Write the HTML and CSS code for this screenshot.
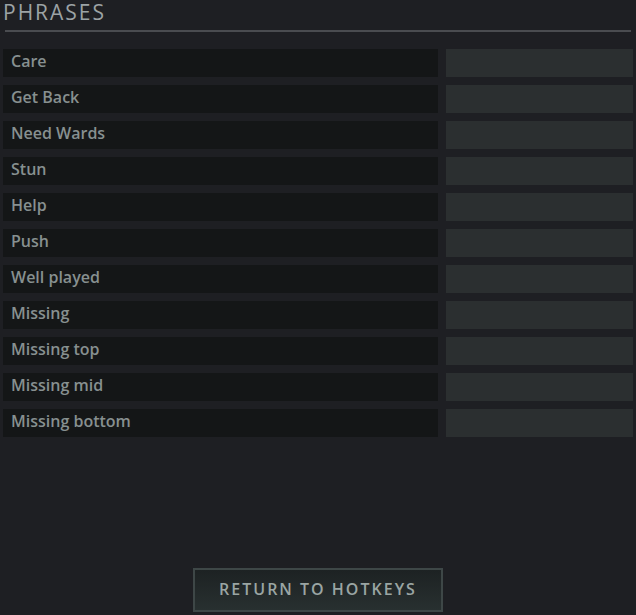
FILE: index.html
```html
<!DOCTYPE html>
<html lang="en">
<head>
    <meta charset="UTF-8">
    <meta name="viewport" content="width=device-width, initial-scale=1.0">
    <title>Phrases</title>
    <link rel="stylesheet" href="styles.css">
</head>
<body>
    <div class="panel">
        <h1 class="panel-title">PHRASES</h1>
        <div class="divider"></div>

        <div class="phrase-list">
            <div class="phrase-row"><div class="phrase-name">Care</div><div class="phrase-key"></div></div>
            <div class="phrase-row"><div class="phrase-name">Get Back</div><div class="phrase-key"></div></div>
            <div class="phrase-row"><div class="phrase-name">Need Wards</div><div class="phrase-key"></div></div>
            <div class="phrase-row"><div class="phrase-name">Stun</div><div class="phrase-key"></div></div>
            <div class="phrase-row"><div class="phrase-name">Help</div><div class="phrase-key"></div></div>
            <div class="phrase-row"><div class="phrase-name">Push</div><div class="phrase-key"></div></div>
            <div class="phrase-row"><div class="phrase-name">Well played</div><div class="phrase-key"></div></div>
            <div class="phrase-row"><div class="phrase-name">Missing</div><div class="phrase-key"></div></div>
            <div class="phrase-row"><div class="phrase-name">Missing top</div><div class="phrase-key"></div></div>
            <div class="phrase-row"><div class="phrase-name">Missing mid</div><div class="phrase-key"></div></div>
            <div class="phrase-row"><div class="phrase-name">Missing bottom</div><div class="phrase-key"></div></div>
        </div>

        <div class="footer">
            <button class="return-btn">RETURN TO HOTKEYS</button>
        </div>
    </div>
</body>
</html>
```

FILE: styles.css
```css
html, body {
    height: 100%;
}
body {
    font-family: "Open Sans", "Noto Sans", sans-serif;
    background-color: #1e1f23;
    color: #879090;
    margin: 0;
}
.panel {
    display: flex;
    flex-direction: column;
    height: 615px;
    padding: 0 3px;
    box-sizing: border-box;
}
.panel-title {
    margin: 0;
    font-size: 21px;
    font-weight: 400;
    letter-spacing: 2px;
    color: #9ca3a5;
    line-height: 25px;
    height: 30px;
}
.divider {
    height: 2px;
    margin: 0 2px;
    background-color: #4a4c50;
}
.phrase-list {
    display: flex;
    flex-direction: column;
    gap: 8px;
    margin-top: 17px;
}
.phrase-row {
    display: flex;
    gap: 8px;
    height: 28px;
}
.phrase-name {
    width: 435px;
    background-color: #141617;
    padding-left: 8px;
    box-sizing: border-box;
    font-size: 16px;
    font-weight: 600;
    line-height: 24px;
}
.phrase-key {
    width: 187px;
    background-color: #2b2f30;
}
.footer {
    margin-top: auto;
    display: flex;
    justify-content: center;
    padding-bottom: 3px;
}
.return-btn {
    width: 250px;
    height: 44px;
    border: 2px solid #3e4747;
    background: linear-gradient(to bottom, #1d2223, #283030);
    color: #9aa5a3;
    font-family: "Open Sans", "Noto Sans", sans-serif;
    font-size: 16px;
    font-weight: 600;
    letter-spacing: 2px;
    padding: 0 0 2px;
    cursor: pointer;
}
```
